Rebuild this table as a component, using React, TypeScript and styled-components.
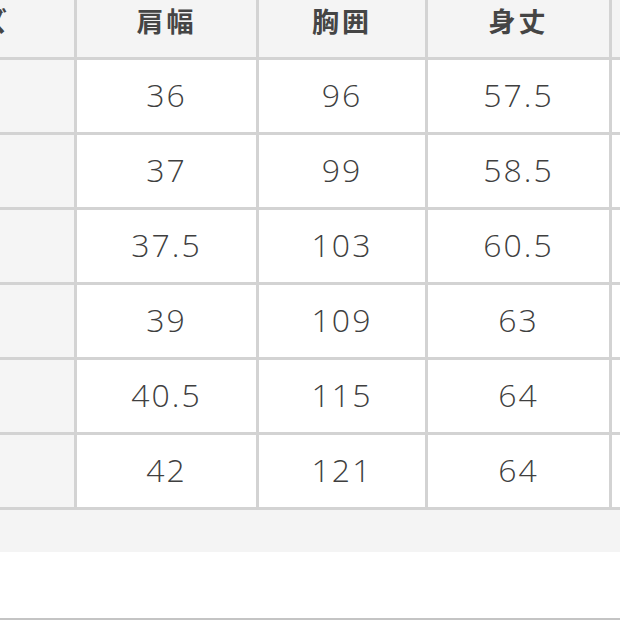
import styled, { createGlobalStyle } from 'styled-components';

const GlobalStyle = createGlobalStyle`
	html, body {
		margin: 0;
		padding: 0;
		background: #ffffff;
	}
	body {
		width: 620px;
		height: 620px;
		overflow: hidden;
	}
`;

const headers = ['肩幅', '胸囲', '身丈'];

const rows = [
	['36', '96', '57.5'],
	['37', '99', '58.5'],
	['37.5', '103', '60.5'],
	['39', '109', '63'],
	['40.5', '115', '64'],
	['42', '121', '64'],
];

export default function App() {
	return (
		<Page>
			<GlobalStyle />
			<Table>
				<HeadCell edge>
					<span>サイズ</span>
				</HeadCell>
				{headers.map((h) => (
					<HeadCell key={h}>{h}</HeadCell>
				))}
				<HeadCell />
				{rows.map((r, i) => (
					<Row key={i} cells={r} />
				))}
			</Table>
			<Footer />
			<Spacer />
			<BottomRule />
		</Page>
	);
}

function Row({ cells }: { cells: string[] }) {
	return (
		<>
			<SideCell />
			{cells.map((c, j) => (
				<Cell key={j}>{c}</Cell>
			))}
			<Cell />
		</>
	);
}

const Page = styled.div`
	width: 620px;
	height: 620px;
	display: flex;
	flex-direction: column;
	background: #ffffff;
`;

const Table = styled.div`
	display: grid;
	grid-template-columns: 74px 179px 166px 181px 1fr;
	grid-template-rows: 57px repeat(6, 72px);
	gap: 3px;
	padding-bottom: 3px;
	background: #d3d3d3;
`;

const HeadCell = styled.div<{ edge?: boolean }>`
	background: #f4f4f4;
	display: flex;
	align-items: center;
	justify-content: ${(p) => (p.edge ? 'flex-end' : 'center')};
	padding-right: ${(p) => (p.edge ? '64px' : '0')};
	padding-bottom: 16px;
	overflow: hidden;
	white-space: nowrap;
	font-family: 'Noto Sans CJK JP', 'Noto Sans', sans-serif;
	font-weight: 700;
	font-size: 27px;
	letter-spacing: 3px;
	color: #454545;
`;

const SideCell = styled.div`
	background: #f5f5f5;
`;

const Cell = styled.div`
	background: #ffffff;
	display: flex;
	align-items: center;
	justify-content: center;
	padding-bottom: 4px;
	font-family: 'Open Sans', 'Liberation Sans', sans-serif;
	font-weight: 300;
	font-size: 32px;
	letter-spacing: 2px;
	color: #3f3f3f;
`;

const Footer = styled.div`
	height: 42px;
	background: #f4f4f4;
`;

const Spacer = styled.div`
	flex: 1;
	background: #ffffff;
`;

const BottomRule = styled.div`
	height: 2px;
	background: #c4c4c4;
`;
